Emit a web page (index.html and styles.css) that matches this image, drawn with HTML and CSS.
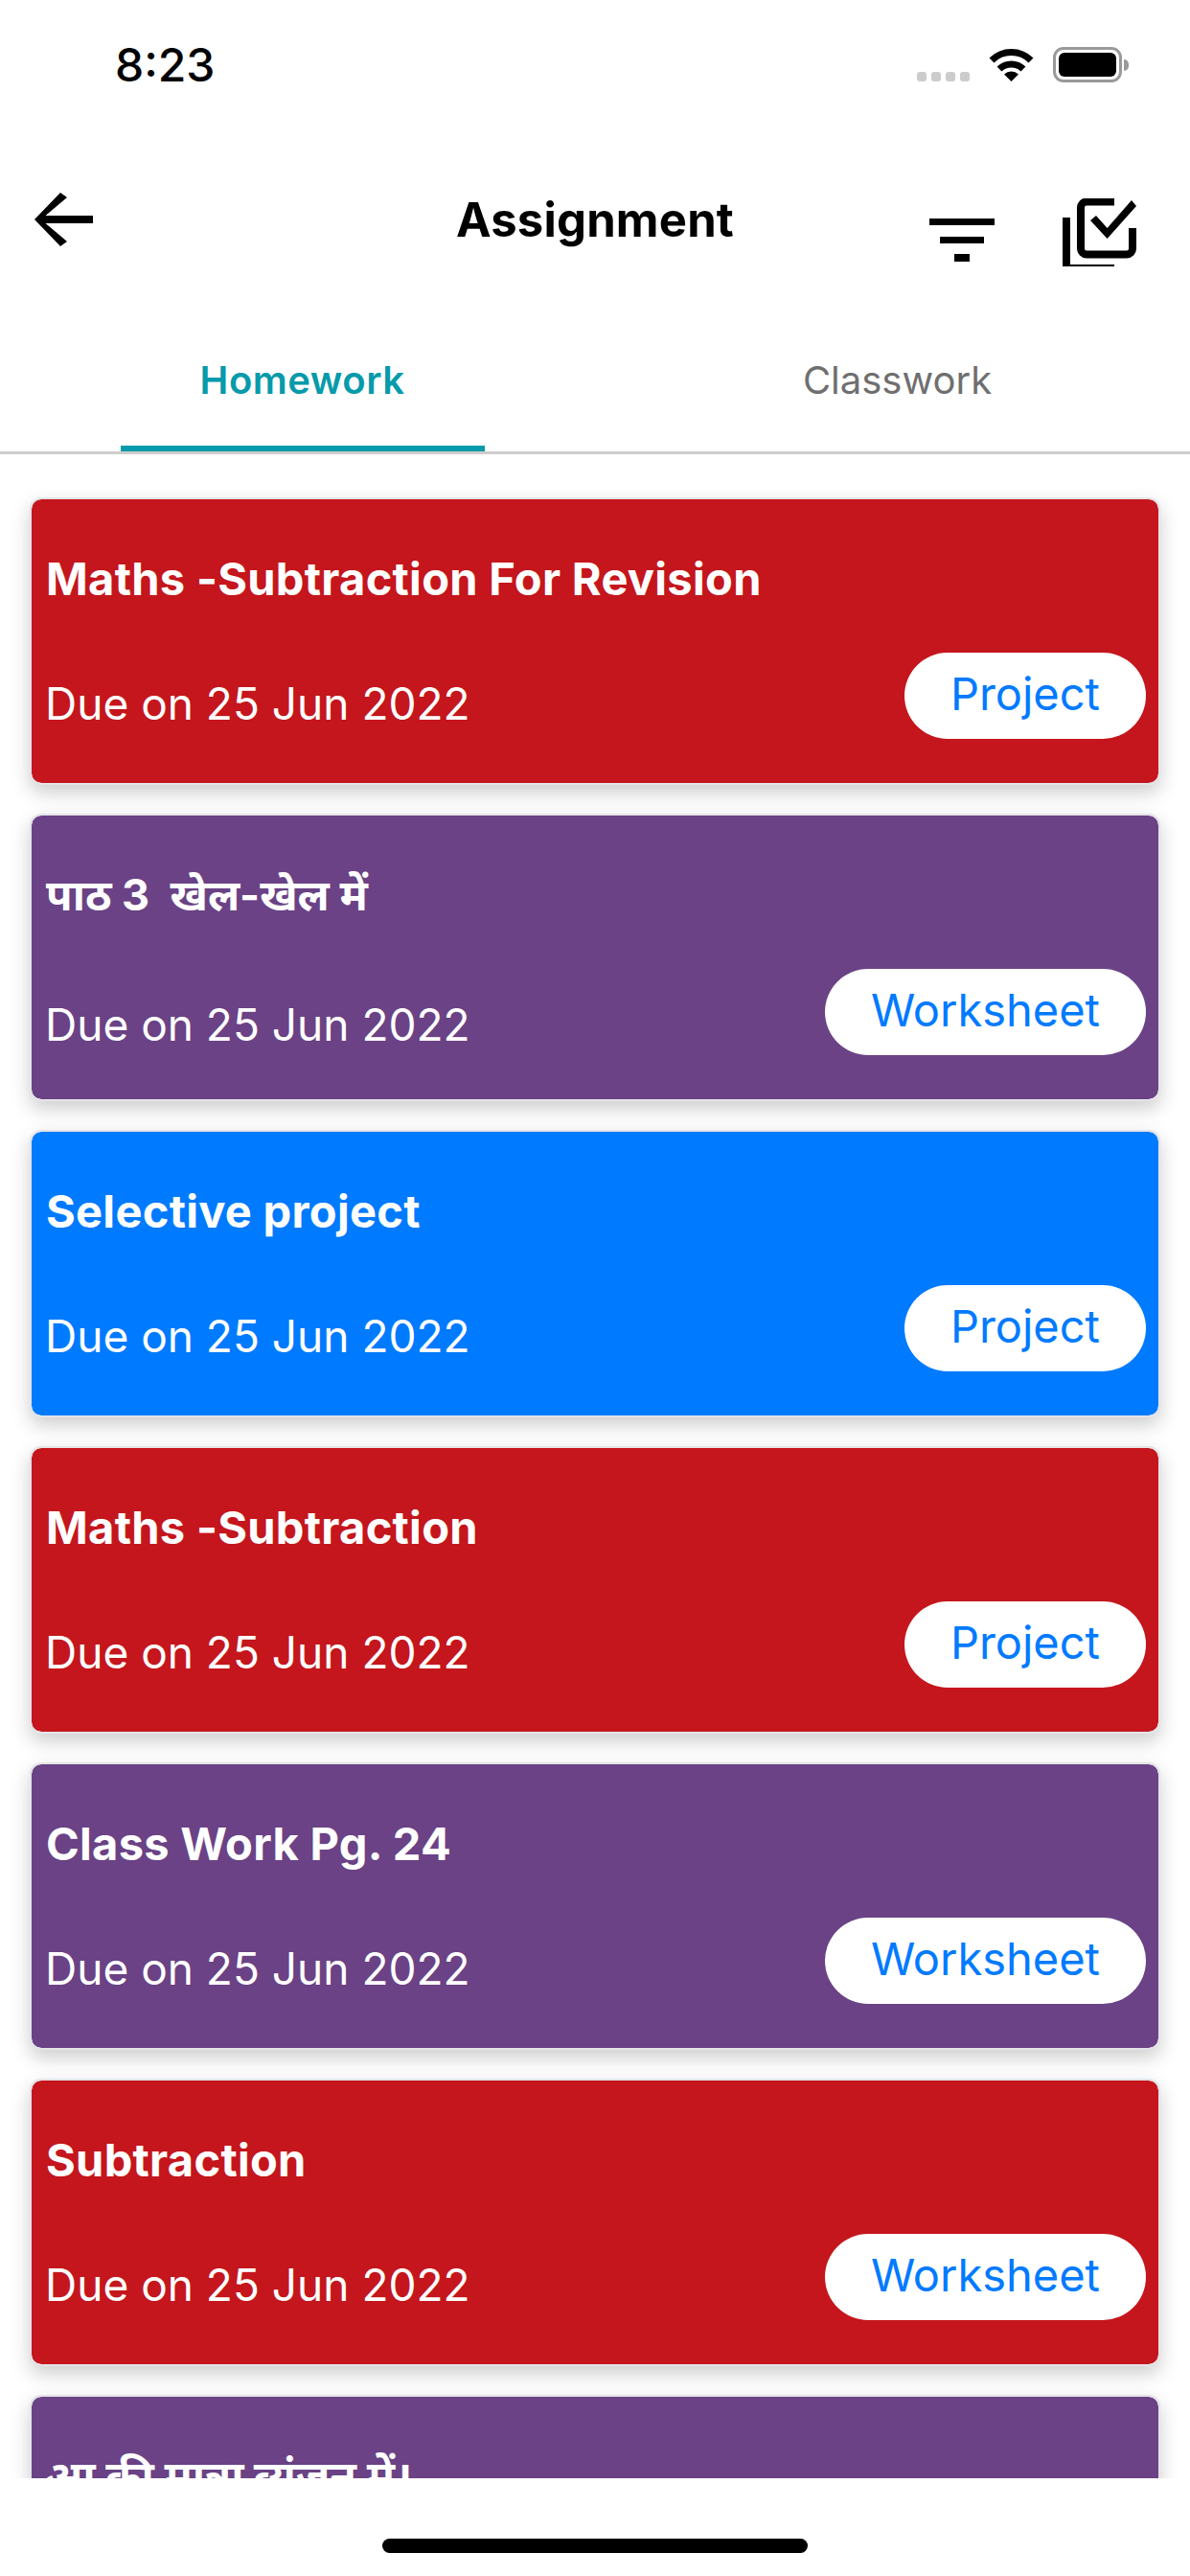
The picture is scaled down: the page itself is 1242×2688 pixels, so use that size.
FILE: index.html
```html
<!DOCTYPE html>
<html>
	<head>
		<meta charset="UTF-8">
		<title>Assignment</title>
		<link rel="stylesheet" href="styles.css">
	</head>
	<body>
		<div class="status">
			<span class="time">8:23</span>
			<div class="status-right">
				<div class="dots"><i></i><i></i><i></i><i></i></div>
				<svg class="wifi" width="47" height="36" viewBox="0 0 47 36">
					<path d="M3 14A29 29 0 0 1 44 14" fill="none" stroke="#000" stroke-width="7"/>
					<path d="M11 23A18 18 0 0 1 36 23" fill="none" stroke="#000" stroke-width="7"/>
					<path d="M23.5 36L16 28.500A11 11 0 0 1 31 28.500Z"/>
				</svg>
				<div class="battery"><b></b></div>
				<div class="nub"></div>
			</div>
		</div>

		<div class="header">
			<svg class="back" width="61" height="56" viewBox="0 0 61 56">
				<polygon points="0,28 27,0 34,5 11.500,24 61,24 61,32 11.500,32 34,51 27,56"/>
			</svg>
			<div class="title">Assignment</div>
			<div class="actions">
				<svg class="filter" width="68" height="45" viewBox="0 0 68 45">
					<rect x="0" y="0" width="68" height="7"/>
					<rect x="11" y="19" width="46" height="7"/>
					<rect x="26" y="37" width="16" height="8"/>
				</svg>
				<svg class="select" width="77" height="71" viewBox="0 0 77 71">
					<rect x="0" y="20" width="8" height="51"/>
					<rect x="0" y="69" width="54" height="2"/>
					<path d="M54 3.500H25a6 6 0 0 0-6 6V52.500a6 6 0 0 0 6 6H67a6 6 0 0 0 6-6V31" fill="none" stroke="#000" stroke-width="8"/>
					<polygon points="29,23 35,18 46.600,31 72,2 77,8 46.600,42"/>
				</svg>
			</div>
		</div>

		<div class="tabs">
			<div class="tab active"><span>Homework</span></div>
			<div class="tab"><span>Classwork</span></div>
		</div>

		<div class="list">
			<div class="card red">
				<div class="card-title">Maths -Subtraction For Revision</div>
				<div class="card-row">
					<span class="due">Due on 25 Jun 2022</span>
					<span class="pill">Project</span>
				</div>
			</div>
			<div class="card purple hindi">
				<div class="card-title">पाठ 3 &nbsp;खेल-खेल में</div>
				<div class="card-row">
					<span class="due">Due on 25 Jun 2022</span>
					<span class="pill">Worksheet</span>
				</div>
			</div>
			<div class="card blue">
				<div class="card-title">Selective project</div>
				<div class="card-row">
					<span class="due">Due on 25 Jun 2022</span>
					<span class="pill">Project</span>
				</div>
			</div>
			<div class="card red">
				<div class="card-title">Maths -Subtraction</div>
				<div class="card-row">
					<span class="due">Due on 25 Jun 2022</span>
					<span class="pill">Project</span>
				</div>
			</div>
			<div class="card purple">
				<div class="card-title">Class Work Pg. 24</div>
				<div class="card-row">
					<span class="due">Due on 25 Jun 2022</span>
					<span class="pill">Worksheet</span>
				</div>
			</div>
			<div class="card red">
				<div class="card-title">Subtraction</div>
				<div class="card-row">
					<span class="due">Due on 25 Jun 2022</span>
					<span class="pill">Worksheet</span>
				</div>
			</div>
			<div class="card purple hindi">
				<div class="card-title">आ की मात्रा व्यंजन में।</div>
				<div class="card-row">
					<span class="due">Due on 25 Jun 2022</span>
					<span class="pill">Project</span>
				</div>
			</div>
		</div>

		<div class="home-area"><div class="home-bar"></div></div>
	</body>
</html>
```

FILE: styles.css
```css
*{
	margin: 0;
	padding: 0;
	box-sizing: border-box;
}
body{
	width: 1242px;
	height: 2688px;
	overflow: hidden;
	background-color: #fff;
	font-family: Inter, "Noto Sans", "Noto Sans Devanagari", sans-serif;
	color: #000;
}

/*status bar*/
.status{
	height: 132px;
	padding: 40px 64px 0 120px;
	display: flex;
	justify-content: space-between;
	align-items: flex-start;
}
.time{
	font-size: 48px;
	font-weight: 500;
	line-height: 56px;
}
.status-right{
	display: flex;
	align-items: flex-start;
	padding-top: 9px;
}
.dots{
	display: flex;
	gap: 5px;
	margin-top: 26px;
	margin-right: 20px;
}
.dots i{
	width: 10px;
	height: 10px;
	border-radius: 3px;
	background-color: #ccc;
}
.wifi{
	margin-right: 20px;
}
.battery{
	width: 72px;
	height: 37px;
	border: 3px solid #999;
	border-radius: 11px;
	padding: 3px;
}
.battery b{
	display: block;
	height: 100%;
	background-color: #000;
	border-radius: 6px;
}
.nub{
	width: 5px;
	height: 12px;
	margin: 13px 0 0 2px;
	background-color: #999;
	border-radius: 0 6px 6px 0;
}

/*header*/
.header{
	height: 208px;
	display: grid;
	grid-template-columns: 1fr auto 1fr;
	align-items: start;
}
.back{
	margin: 69px 0 0 36px;
}
.title{
	margin-top: 70px;
	font-size: 49px;
	font-weight: 700;
	letter-spacing: 0.2px;
	line-height: 56px;
}
.actions{
	display: flex;
	justify-content: flex-end;
	align-items: flex-start;
	gap: 71px;
	padding-right: 56px;
}
.filter{
	margin-top: 96px;
}
.select{
	margin-top: 75px;
}

/*tabs*/
.tabs{
	display: grid;
	grid-template-columns: 621px 621px;
	height: 134px;
	padding-left: 5px;
	border-bottom: 3px solid #ccc;
}
.tab{
	display: flex;
	justify-content: center;
	font-size: 40px;
	color: #6f6f6f;
}
.tab span{
	width: 380px;
	height: 131px;
	padding-top: 33px;
	line-height: 48px;
	text-align: center;
}
.tab.active{
	color: #069aab;
	font-weight: 600;
	letter-spacing: 0.5px;
}
.tab.active span{
	border-bottom: 6px solid #069aab;
}

/*assignment list*/
.list{
	height: 2112px;
	overflow: hidden;
	padding: 45px 31px 0;
	display: flex;
	flex-direction: column;
	gap: 30px;
}
.card{
	flex: none;
	height: 300px;
	padding: 53px 13px 0 15px;
	border: 2px solid #e4e4e8;
	border-radius: 12px;
	box-shadow: 0 8px 20px rgba(0,0,0,0.2);
	color: #fff;
	background-clip: padding-box;
}
.red{
	background-color: #c4161c;
}
.purple{
	background-color: #6a4285;
}
.blue{
	background-color: #007aff;
}
.card-title{
	height: 60px;
	font-size: 47px;
	font-weight: 700;
	letter-spacing: 0.3px;
	line-height: 60px;
}
.hindi .card-title{
	font-size: 45px;
	letter-spacing: 0;
}
.card-row{
	margin-top: 47px;
	display: flex;
	justify-content: space-between;
	align-items: center;
}
.due{
	margin: 16px 0 0 -1px;
	font-size: 46px;
	line-height: 56px;
}
.hindi .due{
	margin-top: 26px;
}
.pill{
	height: 90px;
	padding: 0 48px;
	border-radius: 45px;
	background-color: #fff;
	color: #007aff;
	font-size: 47px;
	line-height: 86px;
}

/*bottom*/
.home-area{
	height: 102px;
	padding-top: 63px;
	background-color: #fff;
	position: relative;
}
.home-bar{
	width: 444px;
	height: 15px;
	margin: 0 auto;
	border-radius: 8px;
	background-color: #000;
}
```
